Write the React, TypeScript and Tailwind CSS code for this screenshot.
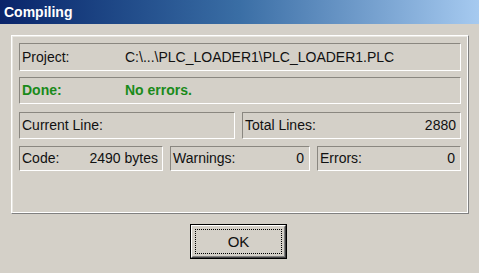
import React from 'react';

const font = { fontFamily: '"Liberation Sans", Arial, sans-serif' };

const Field: React.FC<{ className?: string; children?: React.ReactNode }> = ({ className = '', children }) => (
  <div
    className={`flex items-center border border-t-[#8a8780] border-l-[#8a8780] border-b-white border-r-white px-[1px] text-[14px] ${className}`}
  >
    {children}
  </div>
);

const App: React.FC = () => {
  return (
    <div className="w-[479px] h-[273px] bg-[#d4d0c8] text-[#111] flex flex-col overflow-hidden" style={font}>
      {/* title bar */}
      <div className="h-[24px] flex items-center pl-[4px] bg-gradient-to-r from-[#0a246a] via-[#3a6ea5] to-[#a6caf0]">
        <span className="text-white font-bold text-[14px] leading-none">Compiling</span>
      </div>

      {/* group panel */}
      <div className="ml-[11px] mt-[11px] w-[458px] h-[179px] border border-t-white border-l-white border-b-[#808080] border-r-[#808080]">
        <div className="h-full border border-t-[#e8e6e0] border-l-[#e8e6e0] border-b-white border-r-white px-[6px] pt-[6px] flex flex-col">
          <Field className="h-[28px]">
            <span className="w-[104px] pl-[1px]">Project:</span>
            <span>C:\...\PLC_LOADER1\PLC_LOADER1.PLC</span>
          </Field>

          <Field className="h-[27px] mt-[6px] font-bold text-[#1a8a1a]">
            <span className="w-[104px] pl-[1px]">Done:</span>
            <span>No errors.</span>
          </Field>

          <div className="flex mt-[8px] gap-[7px]">
            <Field className="h-[27px] w-[216px]">
              <span className="pl-[1px]">Current Line:</span>
            </Field>
            <Field className="h-[27px] flex-1 justify-between pr-[4px]">
              <span className="pl-[1px]">Total Lines:</span>
              <span>2880</span>
            </Field>
          </div>

          <div className="flex mt-[7px] gap-[7px]">
            <Field className="h-[25px] w-[144px] justify-between pr-[4px]">
              <span className="pl-[1px]">Code:</span>
              <span>2490 bytes</span>
            </Field>
            <Field className="h-[25px] w-[140px] justify-between pr-[5px]">
              <span className="pl-[1px]">Warnings:</span>
              <span>0</span>
            </Field>
            <Field className="h-[25px] flex-1 justify-between pr-[5px]">
              <span className="pl-[1px]">Errors:</span>
              <span>0</span>
            </Field>
          </div>
        </div>
      </div>

      {/* OK button */}
      <div className="flex justify-center mt-[10px] pr-[2px]">
        <div className="w-[97px] h-[35px] border border-black">
          <div className="h-full border border-t-white border-l-white border-b-[#404040] border-r-[#404040]">
            <div className="h-full border border-t-[#d4d0c8] border-l-[#d4d0c8] border-b-[#808080] border-r-[#808080] p-[2px]">
              <div className="h-full border border-dotted border-black flex items-center justify-center">
                <span className="text-[15px] leading-none">OK</span>
              </div>
            </div>
          </div>
        </div>
      </div>
    </div>
  );
};

export default App;
